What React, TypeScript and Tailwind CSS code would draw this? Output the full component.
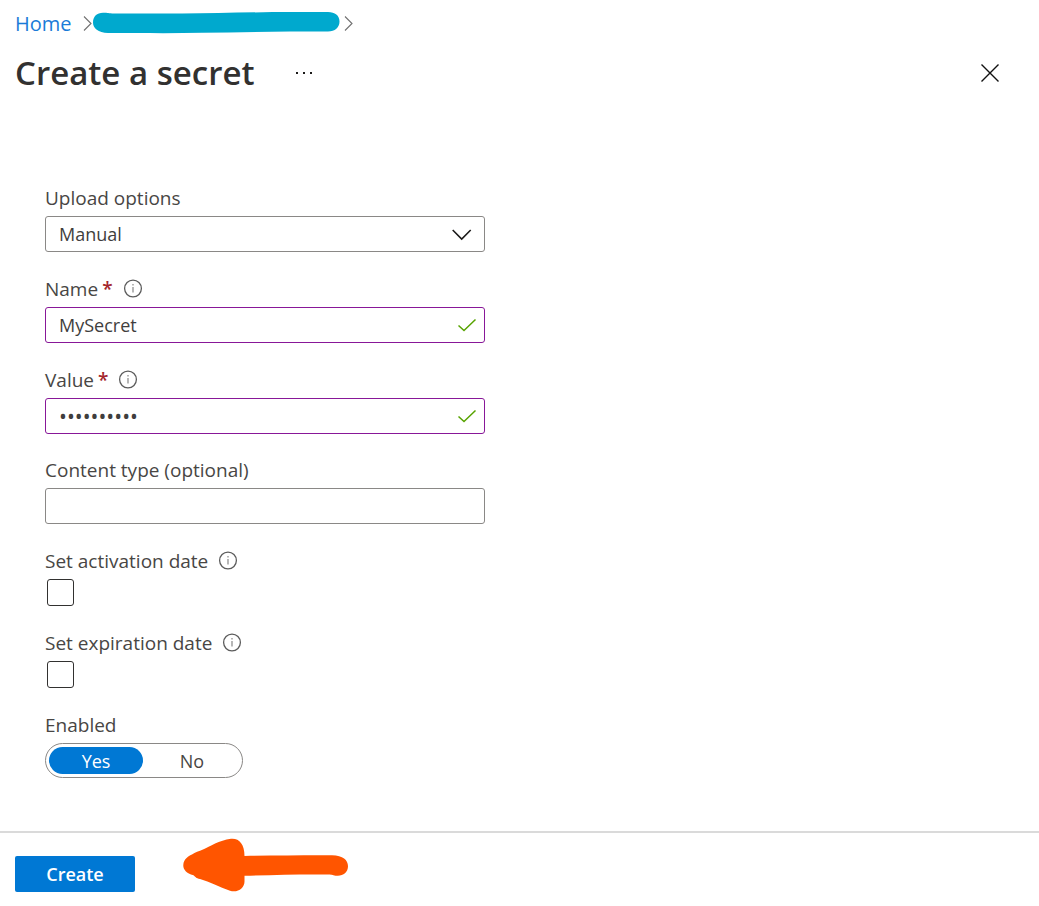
import { useState } from "react";
import type { ReactNode } from "react";

const inputClass =
  "block h-9 w-full rounded-[3px] border bg-white pl-[13px] pr-10 text-[#3f3e3d] outline-none";

function InfoIcon() {
  return (
    <svg width="20" height="20" viewBox="0 0 20 20" fill="none" aria-hidden="true">
      <circle cx="10" cy="9.5" r="8.4" stroke="#5c5c5c" strokeWidth="1.3" />
      <path d="M10 8V13.5" stroke="#909090" strokeWidth="1.3" />
      <path d="M10 5V6.5" stroke="#909090" strokeWidth="1.3" />
    </svg>
  );
}

function CheckMark() {
  return (
    <svg className="pointer-events-none absolute right-2 top-2" width="20" height="20" viewBox="0 0 20 20" fill="none" aria-hidden="true">
      <path d="M1.5 10.5L7 15.5L18.5 4.5" stroke="#57a300" strokeWidth="1.5" />
    </svg>
  );
}

function Crumb() {
  return (
    <svg width="9" height="16" viewBox="0 0 9 16" fill="none" aria-hidden="true">
      <path d="M1 .5L8 7.5L1 14.5" stroke="#707070" strokeWidth="1.1" />
    </svg>
  );
}

type FieldProps = {
  id: string;
  label: string;
  required?: boolean;
  info?: boolean;
  children: ReactNode;
};

function Field({ id, label, required, info, children }: FieldProps) {
  return (
    <div className="flex flex-col gap-1">
      <div className="flex h-7 items-center">
        <label htmlFor={id} className="flex items-center gap-1">
          {label}
          {required && <span className="font-semibold text-[#a4262c]">*</span>}
        </label>
        {info && (
          <button type="button" aria-label={`About ${label}`} className="ml-[10px]">
            <InfoIcon />
          </button>
        )}
      </div>
      {children}
    </div>
  );
}

function CheckField({ id, label }: { id: string; label: string }) {
  return (
    <Field id={id} label={label} info>
      <input
        id={id}
        type="checkbox"
        className="ml-[2px] size-[27px] appearance-none rounded-[3px] border border-[#323130] bg-white checked:bg-[#0078d4]"
      />
    </Field>
  );
}

export default function App() {
  const [enabled, setEnabled] = useState(true);

  return (
    <div className="flex min-h-screen flex-col bg-white font-['Open_Sans','Noto_Sans',sans-serif] text-[19px] leading-7 text-[#484644]">
      <header className="pl-[15px] pr-10 pt-[10px]">
        <nav aria-label="Breadcrumb" className="flex h-7 items-center">
          <a href="#home" className="mr-[11px] text-[20px] text-[#1a7bd8]">Home</a>
          <Crumb />
          <svg className="mr-1" width="248" height="24" viewBox="0 0 248 24" aria-hidden="true">
            <path
              d="M11 .8C15 .6 16 1.5 22 1.5H90C125 1.5 160 0 200 0H236C243 0 247.5 3.5 247.5 9.5C247.5 15.5 243 19.5 236 19.5C190 19.5 150 20 110 20.8C80 21.4 50 21 16 21C6 20.5 1 16.5 1 10.5C1 4.5 5 .8 11 .8Z"
              fill="#00a9ce"
            />
          </svg>
          <Crumb />
        </nav>
        <div className="flex h-[70px] items-center">
          <h1 className="text-[33px] font-semibold text-[#323130]">Create a secret</h1>
          <button type="button" aria-label="More actions" className="ml-10">
            <svg width="18" height="4" viewBox="0 0 18 4" fill="#1b1a19" aria-hidden="true">
              <rect x="2" y="1" width="2" height="2" />
              <rect x="9" y="1" width="2" height="2" />
              <rect x="16" y="1" width="2" height="2" />
            </svg>
          </button>
          <button type="button" aria-label="Close" className="ml-auto">
            <svg width="18" height="18" viewBox="0 0 18 18" fill="none" aria-hidden="true">
              <path d="M.5 .5L17.5 17.5M17.5 .5L.5 17.5" stroke="#111" strokeWidth="1.4" />
            </svg>
          </button>
        </div>
      </header>

      <main className="flex-1 px-[45px] pb-[53px] pt-[76px]">
        <form className="flex max-w-[440px] flex-col gap-[22px]">
          <div className="flex flex-col gap-[23px]">
            <Field id="upload" label="Upload options">
              <div className="relative">
                <select id="upload" className={`${inputClass} appearance-none border-[#8a8886] text-[18px]`}>
                  <option>Manual</option>
                </select>
                <svg className="pointer-events-none absolute right-3 top-2" width="22" height="20" viewBox="0 0 22 20" fill="none" aria-hidden="true">
                  <path d="M1.7 6L10.7 15L19.7 6" stroke="#1b1a19" strokeWidth="1.6" />
                </svg>
              </div>
            </Field>
            <Field id="name" label="Name" required info>
              <div className="relative">
                <input id="name" type="text" defaultValue="MySecret" className={`${inputClass} border-[#881798] text-[18px]`} />
                <CheckMark />
              </div>
            </Field>
            <Field id="value" label="Value" required info>
              <div className="relative">
                <input id="value" type="password" defaultValue="abcdefghij" className={`${inputClass} border-[#881798] text-[21px]`} />
                <CheckMark />
              </div>
            </Field>
          </div>
          <div className="flex flex-col gap-[23px]">
            <Field id="content-type" label="Content type (optional)">
              <input id="content-type" type="text" className={`${inputClass} border-[#8a8886] text-[18px]`} />
            </Field>
            <CheckField id="activation" label="Set activation date" />
            <CheckField id="expiration" label="Set expiration date" />
            <div className="flex flex-col gap-1">
              <span id="enabled-label">Enabled</span>
              <div
                role="group"
                aria-labelledby="enabled-label"
                className="grid h-[35px] w-[198px] grid-cols-2 gap-[2px] rounded-full border border-[#8a8886] p-[3px] text-[18px] leading-[26px]"
              >
                <button
                  type="button"
                  aria-pressed={enabled}
                  onClick={() => setEnabled(true)}
                  className="rounded-full aria-pressed:bg-[#0078d4] aria-pressed:font-medium aria-pressed:text-white"
                >
                  Yes
                </button>
                <button
                  type="button"
                  aria-pressed={!enabled}
                  onClick={() => setEnabled(false)}
                  className="rounded-full aria-pressed:bg-[#0078d4] aria-pressed:font-medium aria-pressed:text-white"
                >
                  No
                </button>
              </div>
            </div>
          </div>
        </form>
      </main>

      <footer className="flex h-[75px] items-start border-t-2 border-[#dadada] pl-[15px]">
        <button type="button" className="mt-[23px] h-9 w-[120px] rounded-[2px] bg-[#0078d4] text-[18px] font-semibold text-white">
          Create
        </button>
        <svg className="ml-12 mt-[5px]" width="166" height="54" viewBox="0 0 166 54" aria-hidden="true">
          <path
            d="M20 11.5C27 8.5 36 2.5 48 .8C56 0 61.5 6 61.5 18C90 17.5 120 17.2 149 17.3C160 17.5 165 22 165 28.3C165 34.5 160 38.2 154 37.8C150 37.8 149 36.6 146 36.6C120 36.2 90 37 61.5 37.8V43.5C61.5 50 55 55 47 52.8C36 49 27 44 17 41C13 40.5 12 38.5 10.5 37.3C3 35.5 0 31 .3 27C.5 21 6 17.5 9 16.5C12 14.5 16 13 20 11.5Z"
            fill="#ff5500"
          />
        </svg>
      </footer>
    </div>
  );
}
